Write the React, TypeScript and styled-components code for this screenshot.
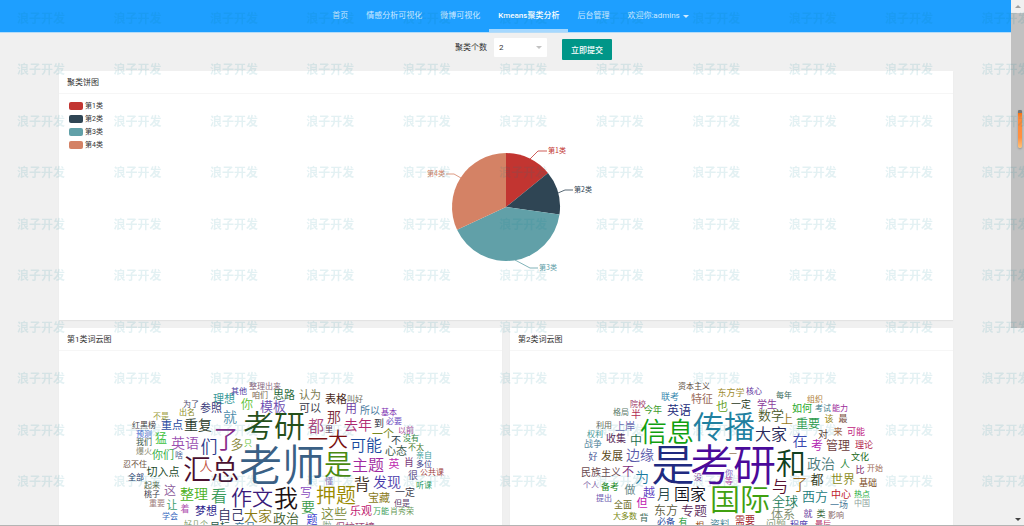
import React from "react";
import styled, { createGlobalStyle } from "styled-components";

const fontStack = `Roboto, "Noto Sans CJK SC", sans-serif`;

const GlobalStyle = createGlobalStyle`
  * { box-sizing: border-box; }
  body {
    margin: 0;
    overflow: hidden;
    background: #f0f0f0;
    color: #333;
    font: 8px/12px ${fontStack};
  }
`;

const Shell = styled.div`
  display: flex;
  height: 100vh;
  overflow: hidden;
  border-bottom: 1px solid #b4b4b4;
`;

const Page = styled.div`
  flex: 1;
  min-width: 0;
  overflow: hidden;
`;

const NavBar = styled.nav`
  display: flex;
  justify-content: center;
  height: 33px;
  padding-left: 10px;
  background: #1e9fff;
  border-bottom: 1px solid #b5dcf8;
`;

const NavLink = styled.a<{ $active?: boolean }>`
  display: flex;
  align-items: center;
  gap: 3px;
  padding: 3px 9px 0;
  color: ${(p) => (p.$active ? "#fff" : "#cfeaff")};
  font-weight: ${(p) => (p.$active ? 500 : 400)};
  border-bottom: 3px solid ${(p) => (p.$active ? "#a5d8ff" : "transparent")};
  text-decoration: none;
  white-space: nowrap;
`;

const Caret = styled.span<{ $color: string }>`
  border: 3px solid transparent;
  border-top-color: ${(p) => p.$color};
  border-bottom-width: 0;
`;

const Form = styled.form`
  display: flex;
  justify-content: center;
  align-items: center;
  height: 38px;
  padding: 0 0 9px 56px;
`;

const SelectBox = styled.div`
  display: grid;
  align-items: center;
  width: 53px;
  margin: 0 15px 0 7px;

  > * { grid-area: 1 / 1; }
  ${Caret} { justify-self: end; margin-right: 5px; pointer-events: none; }
`;

const Select = styled.select`
  appearance: none;
  width: 100%;
  height: 19px;
  padding: 0 5px;
  border: 0;
  border-radius: 1px;
  background: #fff;
  color: #333;
  font: 8px ${fontStack};
`;

const SubmitButton = styled.button`
  width: 50px;
  height: 21px;
  margin-top: 4px;
  padding: 0;
  border: 0;
  border-radius: 1px;
  background: #009688;
  color: #fff;
  font: 500 8px ${fontStack};
`;

const Content = styled.main`
  display: grid;
  grid-template-columns: 1fr 1fr;
  gap: 8px;
  padding: 0 58px 0 59px;
`;

const Card = styled.section<{ $wide?: boolean }>`
  grid-column: ${(p) => (p.$wide ? "1 / -1" : "auto")};
  min-width: 0;
  background: #fff;
  box-shadow: 0 1px 1px rgba(0, 0, 0, 0.05);
`;

const CardTitle = styled.h2`
  height: 23px;
  margin: 0;
  padding: 0 8px;
  border-bottom: 1px solid #f6f6f6;
  font-size: 8px;
  font-weight: 400;
  line-height: 23px;
`;

const PieBody = styled.div`
  display: grid;
  height: 226px;
  > * { grid-area: 1 / 1; }
`;

const Legend = styled.ul`
  display: flex;
  flex-direction: column;
  width: max-content;
  margin: 0;
  padding: 5px 10px;
  list-style: none;
  font-size: 7px;
`;

const LegendItem = styled.li<{ $color: string }>`
  display: flex;
  align-items: center;
  gap: 2px;
  height: 13px;

  &::before {
    content: "";
    width: 14px;
    height: 8px;
    border-radius: 2px;
    background: ${(p) => p.$color};
  }
`;

const Chart = styled.svg<{ $weight: number }>`
  display: block;
  width: 100%;
  height: 226px;
  font-family: "Noto Sans CJK SC", sans-serif;
  font-weight: ${(p) => p.$weight};
`;

const ScrollBar = styled.div`
  display: flex;
  flex-direction: column;
  align-items: center;
  width: 13px;
  padding: 5px 0 4px;
  background: #f0f0f0;
`;

const ScrollArrow = styled.span<{ $up?: boolean }>`
  border: 3px solid transparent;
  ${(p) =>
    p.$up
      ? "border-top-width: 0; border-bottom-color: #a0a0a0;"
      : "border-bottom-width: 0; border-top-color: #444; margin-top: auto;"}
`;

const ScrollThumb = styled.div`
  width: 100%;
  height: 61%;
  margin-top: 5px;
  background: #c1c1c1;
`;

const FloatingMarker = styled.div`
  position: fixed;
  top: 110px;
  right: 2px;
  width: 4px;
  height: 38px;
  border-top: 3px solid #777;
  border-radius: 1px 1px 2px 2px;
  background: linear-gradient(#f5700f, #ff8a3a 12%, #ff9040 70%, #ffc27a);
  box-shadow: 0 1px 2px rgba(0, 0, 0, 0.25);
`;

const Watermark = styled.div`
  position: fixed;
  inset: -7px -54px auto 17px;
  display: grid;
  grid-template: repeat(10, 1fr) / repeat(11, 1fr);
  align-items: center;
  height: 515px;
  color: rgba(0, 125, 145, 0.11);
  font-size: 12px;
  font-weight: 700;
  pointer-events: none;
  user-select: none;
`;

const navItems = ["首页", "情感分析可视化", "微博可视化", "Kmeans聚类分析", "后台管理", "欢迎你:admins"];

type Slice = {
  name: string;
  color: string;
  from: number;
  to: number;
  line: string;
  x: number;
  y: number;
  anchor: "start" | "end";
};

const slices: Slice[] = [
  { name: "第1类", color: "#c23531", from: 0, to: 51, line: "24,-48 32,-56 41,-56", x: 42, y: -54, anchor: "start" },
  { name: "第2类", color: "#2f4554", from: 51, to: 98, line: "52,-14 59,-17 67,-17", x: 68, y: -15, anchor: "start" },
  { name: "第3类", color: "#61a0a8", from: 98, to: 245, line: "9,53 24,61 32,61", x: 33, y: 63, anchor: "start" },
  { name: "第4类", color: "#d48265", from: 245, to: 360, line: "-45,-29 -52,-33 -60,-33", x: -61, y: -31, anchor: "end" },
];

const RADIUS = 54;

function arcPath(from: number, to: number) {
  const point = (deg: number) => {
    const a = (deg * Math.PI) / 180;
    return `${RADIUS * Math.sin(a)},${-RADIUS * Math.cos(a)}`;
  };
  return `M0,0 L${point(from)} A${RADIUS},${RADIUS} 0 ${to - from > 180 ? 1 : 0} 1 ${point(to)} Z`;
}

function PieChart() {
  return (
    <Chart $weight={400} viewBox="-447 -113 894 226" role="img" aria-label="聚类饼图">
      {slices.map((s) => (
        <g key={s.name}>
          <path d={arcPath(s.from, s.to)} fill={s.color} />
          <polyline points={s.line} fill="none" stroke={s.color} strokeOpacity={0.8} />
          <text x={s.x} y={s.y} fontSize={7} fill={s.color} textAnchor={s.anchor}>
            {s.name}
          </text>
        </g>
      ))}
    </Chart>
  );
}

// Each word: text, centre x, centre y, size, colour.
type Word = [string, number, number, number, string];

const firstCloud: Word[] = [
  ["老师", 282, 465, 43, "#3a6085"], ["考研", 274, 425, 31, "#25501a"], ["汇总", 211, 469, 28, "#4a1030"],
  ["是", 338, 464, 28, "#4a8a10"], ["了", 226, 438, 25, "#8a2a8a"], ["我", 286, 498, 24, "#201010"],
  ["作文", 252, 497, 21, "#3a1a7a"], ["一大", 328, 439, 20, "#7a1010"], ["押题", 336, 495, 20, "#9a8a00"],
  ["们", 209, 447, 17, "#2a3a8a"], ["都", 316, 426, 16, "#b04a80"], ["可能", 366, 445, 16, "#1a4aa0"],
  ["看", 219, 496, 16, "#3a9a5a"], ["主题", 368, 465, 16, "#a02aa0"], ["背", 362, 484, 16, "#3a2a1a"],
  ["就", 230, 417, 14, "#4a8aaa"], ["重复", 198, 425, 14, "#2a3a2a"], ["英语", 185, 443, 14, "#9a50b0"],
  ["整理", 194, 494, 14, "#4aaf1a"], ["大家", 258, 516, 14, "#8a7a10"], ["那", 334, 417, 14, "#7a2a3a"],
  ["去年", 358, 425, 14, "#b02a70"], ["发现", 387, 482, 14, "#4a3aaa"], ["要", 308, 507, 14, "#3a9a4a"],
  ["模板", 273, 406, 13, "#6a4ab0"], ["多", 237, 444, 13, "#8a8a40"], ["人", 206, 466, 13, "#c05040"],
  ["自己", 231, 514, 13, "#2a2a5a"], ["政治", 286, 518, 13, "#3a5a2a"], ["这些", 334, 513, 13, "#7a8a3a"],
  ["你", 247, 404, 12, "#5abf30"], ["猛", 161, 438, 12, "#3abf3a"], ["这", 170, 490, 12, "#8a5a9a"],
  ["用", 351, 408, 12, "#6a3aa0"], ["写", 306, 492, 12, "#8a4ac0"], ["理想", 224, 399, 11, "#3a9a9a"],
  ["思路", 284, 395, 11, "#2a6a3a"], ["参照", 211, 408, 11, "#3a3a7a"], ["重点", 172, 425, 11, "#2a4aa0"],
  ["你们", 163, 455, 11, "#3aaf4a"], ["切入点", 163, 472, 11, "#1a4a2a"], ["让", 172, 505, 11, "#3aa070"],
  ["梦想", 206, 511, 11, "#2a1a8a"], ["认为", 310, 395, 11, "#7a7a50"], ["表格", 336, 399, 11, "#4a2a1a"],
  ["可以", 310, 408, 11, "#3a3a4a"], ["一个", 383, 434, 11, "#7a8a20"], ["心态", 396, 451, 11, "#3a5a4a"],
  ["英", 394, 464, 11, "#c02ab0"], ["宝藏", 379, 498, 11, "#8a7a20"], ["题", 312, 520, 11, "#3a3ad0"],
  ["乐观", 361, 511, 11, "#c01a70"], ["产品", 245, 528, 11, "#3a7aa0"], ["所以", 370, 410, 10, "#4a7aa0"],
  ["到", 379, 423, 10, "#3a3a4a"], ["不", 396, 440, 10, "#2a3a4a"], ["肖", 409, 462, 10, "#7a3a7a"],
  ["很", 413, 475, 10, "#6a5a90"], ["一定", 405, 492, 10, "#3a3a4a"], ["目标", 220, 526, 10, "#2a5a4a"],
  ["保护环境", 355, 527, 10, "#a04a7a"], ["着", 185, 509, 9, "#b050b0"], ["啦", 327, 526, 9, "#7aa07a"],
  ["整理出来", 265, 386, 8, "#8a6a80"], ["其他", 239, 391, 8, "#4a3aa0"], ["咱们", 260, 395, 8, "#7a6a50"],
  ["为了", 191, 404, 8, "#4a4a6a"], ["出名", 187, 412, 8, "#8a8a20"], ["不是", 161, 416, 8, "#a0a040"],
  ["红黑榜", 144, 425, 8, "#4a4040"], ["预测", 144, 434, 8, "#4a6ad0"], ["我们", 144, 442, 8, "#3a5a4a"],
  ["只", 248, 443, 8, "#5abf30"], ["爆火", 144, 451, 8, "#8a8a70"], ["啥", 179, 455, 8, "#4a5a90"],
  ["忍不住", 135, 464, 8, "#6a5040"], ["全部", 136, 477, 8, "#2a3a6a"], ["起来", 152, 485, 8, "#5a6a4a"],
  ["桃子", 152, 494, 8, "#3a3a4a"], ["重要", 157, 503, 8, "#a08080"], ["学会", 170, 516, 8, "#3a6ac0"],
  ["好几个", 196, 524, 8, "#7a9a60"], ["叫好", 355, 399, 8, "#6a6a5a"], ["基本", 389, 412, 8, "#7a2ab0"],
  ["里", 329, 429, 8, "#5a3a5a"], ["必要", 394, 421, 8, "#6a4ac0"], ["以前", 406, 430, 8, "#b04a9a"],
  ["没有", 411, 438, 8, "#3a8a4a"], ["不太", 416, 447, 8, "#4a7a2a"], ["亲自", 424, 455, 8, "#3aa09a"],
  ["多位", 424, 464, 8, "#3a3a8a"], ["公共课", 432, 472, 8, "#a04040"], ["懂", 329, 481, 8, "#7a6ab0"],
  ["听课", 424, 485, 8, "#2a9a5a"], ["但是", 402, 503, 8, "#5a3a6a"], ["万能", 381, 511, 8, "#3aa05a"],
  ["肖秀荣", 402, 511, 8, "#6a9a5a"],
];

const secondCloud: Word[] = [
  ["是", 673, 465, 43, "#202a80"], ["考研", 733, 465, 43, "#4a0a9a"], ["传播", 724, 426, 31, "#2080a0"],
  ["国际", 740, 499, 30, "#40a010"], ["和", 791, 463, 30, "#104020"], ["信息", 667, 432, 27, "#10a010"],
  ["国家", 690, 494, 16, "#101020"], ["大家", 771, 434, 16, "#2a2a5a"], ["与", 780, 486, 16, "#5a1030"],
  ["了", 800, 484, 16, "#a06a1a"], ["在", 800, 440, 15, "#3a4ab0"], ["边缘", 640, 455, 14, "#5a5aaa"],
  ["为", 642, 477, 14, "#1a7aa0"], ["月", 664, 494, 14, "#2a4a4a"], ["政治", 821, 464, 14, "#4a7a7a"],
  ["专题", 694, 510, 13, "#5a2a5a"], ["数学", 771, 415, 13, "#4a5a2a"], ["都", 817, 479, 13, "#3a3a1a"],
  ["全球", 785, 501, 13, "#1a7a5a"], ["西方", 815, 496, 13, "#1a7a7a"], ["英语", 679, 410, 12, "#1a2a7a"],
  ["也", 722, 406, 12, "#5a9a10"], ["中", 636, 440, 12, "#1a6a4a"], ["不", 628, 471, 12, "#7a2a7a"],
  ["越", 649, 492, 12, "#5a3ac0"], ["上", 787, 419, 12, "#9a7a1a"], ["重要", 808, 423, 12, "#2a9a4a"],
  ["考", 817, 445, 12, "#b01ab0"], ["管理", 838, 445, 12, "#6a3a3a"], ["世界", 843, 479, 12, "#8a8a20"],
  ["体系", 783, 514, 12, "#7a8a6a"], ["东方", 666, 510, 12, "#5a5a3a"], ["特征", 702, 399, 11, "#9a6a5a"],
  ["收集", 616, 438, 10, "#5a2a5a"], ["发展", 612, 456, 11, "#5a4a20"], ["做", 630, 490, 11, "#6a8a8a"],
  ["但", 642, 503, 11, "#c01ab0"], ["半", 636, 414, 10, "#b02a50"], ["上岸", 625, 426, 10, "#6a6ab0"],
  ["民族主义", 601, 472, 10, "#6a4a50"], ["资料", 720, 524, 10, "#4a8a9a"], ["一定", 741, 404, 10, "#2a3a1a"],
  ["学生", 767, 404, 10, "#8a3a9a"], ["如何", 802, 408, 10, "#2aaa2a"], ["对", 823, 434, 10, "#5a3a30"],
  ["人", 845, 464, 10, "#2a8a3a"], ["中心", 841, 494, 10, "#c01a2a"], ["需要", 745, 520, 10, "#a01a2a"],
  ["问题", 776, 524, 10, "#8aa07a"], ["联考", 670, 397, 9, "#3a8ab0"], ["东方学", 731, 393, 9, "#a08a2a"],
  ["今年", 653, 410, 9, "#3a9a2a"], ["战争", 593, 444, 9, "#5a8aa0"], ["好", 593, 457, 9, "#4a5a9a"],
  ["备考", 610, 487, 9, "#1a8a1a"], ["全面", 623, 505, 9, "#6a6a1a"], ["背", 644, 518, 9, "#3a6a5a"],
  ["必备", 666, 522, 9, "#2a4aa0"], ["有", 683, 522, 9, "#2a9a3a"], ["根", 700, 526, 9, "#a05a2a"],
  ["该", 829, 419, 9, "#9a8a20"], ["最", 843, 419, 9, "#7a5040"], ["来", 838, 432, 9, "#a06a4a"],
  ["可能", 856, 432, 9, "#c01a80"], ["理论", 864, 445, 9, "#b01a4a"], ["文化", 860, 457, 9, "#1a6a1a"],
  ["比", 860, 470, 9, "#7a2a6a"], ["基础", 868, 483, 9, "#7a4a1a"], ["一场", 839, 505, 9, "#4a7a9a"],
  ["就", 808, 514, 9, "#6a3a9a"], ["类", 821, 514, 9, "#3a6a3a"], ["程度", 799, 525, 9, "#4a3ab0"],
  ["资本主义", 694, 386, 8, "#5a4a3a"], ["院校", 638, 404, 8, "#a03a6a"], ["格局", 621, 412, 8, "#5a7a6a"],
  ["利用", 604, 425, 8, "#6a6a5a"], ["权利", 595, 434, 8, "#4a9a9a"], ["没", 698, 477, 8, "#8a4aa0"],
  ["你", 729, 473, 8, "#7a5ac0"], ["等", 729, 481, 8, "#b03aa0"], ["一", 733, 454, 8, "#8a6a3a"],
  ["个人", 591, 485, 8, "#7a5aa0"], ["提出", 604, 498, 8, "#6a5ab0"], ["大多数", 625, 516, 8, "#7a8a10"],
  ["核心", 754, 391, 8, "#5a2a9a"], ["每年", 784, 395, 8, "#3a6a5a"], ["组织", 815, 399, 8, "#b0803a"],
  ["考试", 823, 408, 8, "#3a7a8a"], ["能力", 840, 408, 8, "#9a2a9a"], ["开始", 875, 468, 8, "#a0705a"],
  ["热点", 862, 494, 8, "#1aaa3a"], ["中国", 862, 503, 8, "#8aa09a"], ["影响", 836, 515, 8, "#8a6a6a"],
  ["最后", 823, 524, 8, "#b01a5a"],
];

function WordCloud({ words, left, label }: { words: Word[]; left: number; label: string }) {
  return (
    <Chart $weight={350} viewBox={`${left} 351 443 226`} role="img" aria-label={label}>
      {words.map(([text, x, y, size, color]) => (
        <text
          key={`${text}-${x}`}
          x={x}
          y={y + Math.round(size * 0.38)}
          fontSize={size}
          fontWeight={size < 12 ? 400 : undefined}
          fill={color}
          textAnchor="middle"
        >
          {text}
        </text>
      ))}
    </Chart>
  );
}

export default function App() {
  return (
    <>
      <GlobalStyle />
      <Shell>
        <Page>
          <NavBar>
            {navItems.map((item, i) => (
              <NavLink key={item} href="#" $active={i === 3}>
                {item}
                {i === 5 && <Caret $color="#cfeaff" />}
              </NavLink>
            ))}
          </NavBar>
          <Form onSubmit={(e) => e.preventDefault()}>
            <label htmlFor="clusters">聚类个数</label>
            <SelectBox>
              <Select id="clusters" defaultValue="2">
                <option>2</option>
                <option>3</option>
                <option>4</option>
              </Select>
              <Caret $color="#c2c2c2" />
            </SelectBox>
            <SubmitButton type="submit">立即提交</SubmitButton>
          </Form>
          <Content>
            <Card $wide>
              <CardTitle>聚类饼图</CardTitle>
              <PieBody>
                <PieChart />
                <Legend>
                  {slices.map((s) => (
                    <LegendItem key={s.name} $color={s.color}>
                      {s.name}
                    </LegendItem>
                  ))}
                </Legend>
              </PieBody>
            </Card>
            <Card>
              <CardTitle>第1类词云图</CardTitle>
              <WordCloud words={firstCloud} left={59} label="第1类词云图" />
            </Card>
            <Card>
              <CardTitle>第2类词云图</CardTitle>
              <WordCloud words={secondCloud} left={510} label="第2类词云图" />
            </Card>
          </Content>
        </Page>
        <ScrollBar>
          <ScrollArrow $up />
          <ScrollThumb />
          <ScrollArrow />
        </ScrollBar>
      </Shell>
      <FloatingMarker />
      <Watermark aria-hidden="true">
        {Array.from({ length: 110 }, (_, i) => (
          <span key={i}>浪子开发</span>
        ))}
      </Watermark>
    </>
  );
}
